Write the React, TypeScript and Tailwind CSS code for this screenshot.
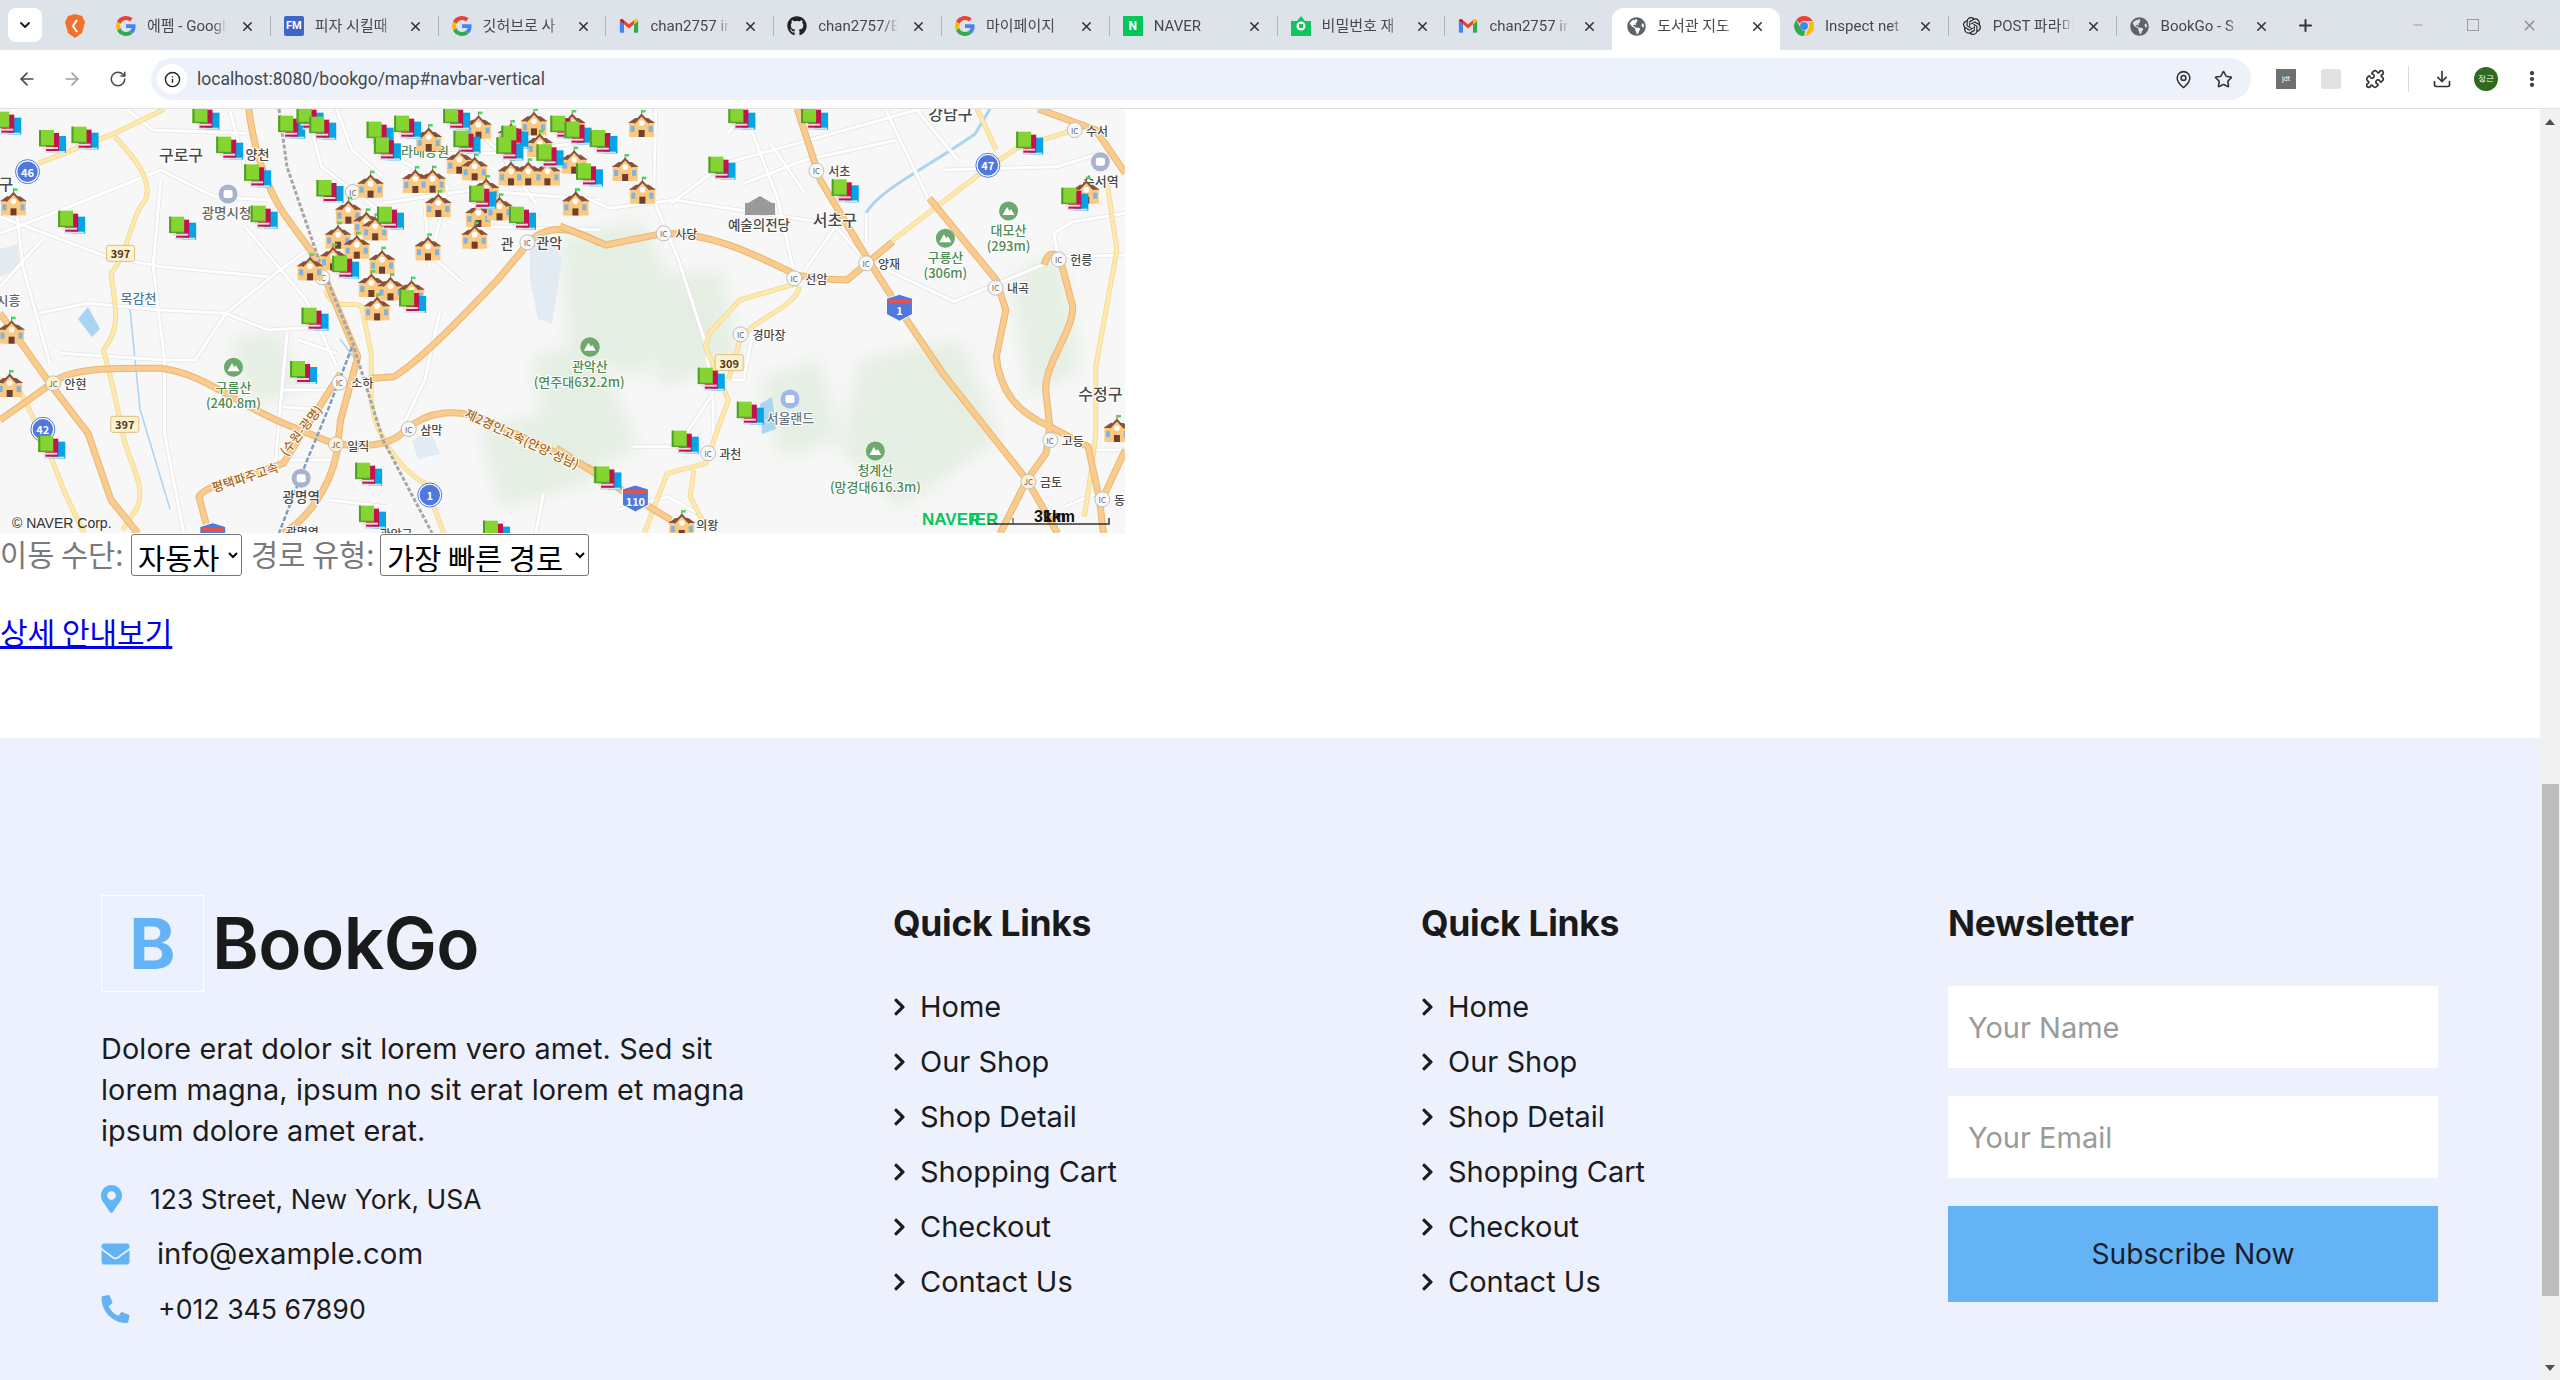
import type { ReactNode } from "react";
import { ArrowLeft, ArrowRight, RotateCw, Info, MapPin, Star, Puzzle, Download, MoreVertical, X, Plus, ChevronDown, Minus } from "lucide-react";
import { FaGithub, FaGlobeAmericas, FaMapMarkerAlt, FaEnvelope, FaPhoneAlt, FaChevronRight } from "react-icons/fa";
import { SiOpenai } from "react-icons/si";

const G = () => (
  <svg width="20" height="20" viewBox="0 0 48 48">
    <path fill="#EA4335" d="M24 9.5c3.5 0 6.7 1.2 9.2 3.6l6.9-6.9C35.9 2.4 30.5 0 24 0 14.6 0 6.5 5.4 2.6 13.2l8 6.2C12.5 13.7 17.8 9.5 24 9.5z" />
    <path fill="#4285F4" d="M47 24.5c0-1.6-.1-3.1-.4-4.5H24v9h13c-.6 3-2.2 5.5-4.8 7.2l7.7 6C44.4 37.9 47 31.8 47 24.5z" />
    <path fill="#FBBC05" d="M10.6 28.6c-.5-1.4-.8-3-.8-4.6s.3-3.2.8-4.6l-8-6.2C.9 16.5 0 20.1 0 24s.9 7.5 2.6 10.8l8-6.2z" />
    <path fill="#34A853" d="M24 48c6.5 0 11.9-2.1 15.9-5.8l-7.7-6c-2.1 1.4-4.9 2.3-8.2 2.3-6.2 0-11.5-4.2-13.4-9.9l-8 6.2C6.5 42.6 14.6 48 24 48z" />
  </svg>
);
const Gmail = () => (
  <svg width="20" height="20" viewBox="0 0 24 24">
    <path fill="#4285F4" d="M1 6v13a1 1 0 0 0 1 1h4V10z" />
    <path fill="#34A853" d="M23 6v13a1 1 0 0 1-1 1h-4V10z" />
    <path fill="#EA4335" d="M6 10v-5l6 5 6-5v5l-6 5z" />
    <path fill="#C5221F" d="M1 6c0-2 2-3 3.5-2L6 5v5L1 6z" />
    <path fill="#FBBC05" d="M23 6c0-2-2-3-3.5-2L18 5v5l5-4z" />
  </svg>
);
const Fm = () => <div className="flex h-5 w-5 items-center justify-center rounded-[2px] bg-[#3f66c4] text-[11px] font-bold text-white">FM</div>;
const Naver = () => <div className="flex h-5 w-5 items-center justify-center bg-[#03c75a] text-[12px] font-bold text-white">N</div>;
const NaverMail = () => (
  <svg width="20" height="22" viewBox="0 0 20 22">
    <path d="M0 6 L6 6 L10 1 L14 6 L20 6 L20 21 L0 21 Z" fill="#12c45c" />
    <circle cx="10" cy="11" r="4.5" fill="#fff" />
    <rect x="8" y="9" width="4" height="4" fill="#12c45c" />
  </svg>
);
const Chrome = () => (
  <svg width="20" height="20" viewBox="0 0 48 48">
    <path fill="#EA4335" d="M24 0a24 24 0 0 1 20.8 12H24a12 12 0 0 0-10.4 6L5.2 9.5A24 24 0 0 1 24 0z" />
    <path fill="#FBBC05" d="M44.8 12A24 24 0 0 1 27 47.8L34.4 30A12 12 0 0 0 34.4 18z" />
    <path fill="#34A853" d="M5.2 9.5l10 17.5a12 12 0 0 0 12 8.6L24 48A24 24 0 0 1 5.2 9.5z" />
    <circle cx="24" cy="24" r="9.5" fill="#4285F4" />
  </svg>
);
const Globe = () => <FaGlobeAmericas className="h-[19px] w-[19px] text-[#5f6368]" />;

const tabs: { title: string; icon: ReactNode; active?: boolean }[] = [
  { title: "에펨 - Google", icon: <G /> },
  { title: "피자 시킬때", icon: <Fm /> },
  { title: "깃허브로 사", icon: <G /> },
  { title: "chan2757 in", icon: <Gmail /> },
  { title: "chan2757/B", icon: <FaGithub className="h-5 w-5 text-[#222]" /> },
  { title: "마이페이지", icon: <G /> },
  { title: "NAVER", icon: <Naver /> },
  { title: "비밀번호 재", icon: <NaverMail /> },
  { title: "chan2757 in", icon: <Gmail /> },
  { title: "도서관 지도", icon: <Globe />, active: true },
  { title: "Inspect net", icon: <Chrome /> },
  { title: "POST 파라미", icon: <SiOpenai className="h-[18px] w-[18px] text-[#222]" /> },
  { title: "BookGo - S", icon: <Globe /> },
];

function TabStrip() {
  return (
    <div className="flex h-[50px] shrink-0 items-start bg-[#dee3e9] font-['Roboto','Noto_Sans_CJK_KR',sans-serif]">
      <div className="ml-2 mt-2 flex h-[34px] w-[34px] items-center justify-center rounded-lg bg-white">
        <ChevronDown size={16} strokeWidth={3} className="text-[#222]" />
      </div>
      <svg className="ml-[23px] mt-[14px]" width="20" height="24" viewBox="0 0 20 24">
        <path d="M10 0 L17 2 L20 8 L17 19 L10 24 L3 19 L0 8 L3 2 Z" fill="#f0702c" />
        <path d="M12 6 L8 12 L12 18" stroke="#fff" strokeWidth="2" fill="none" />
      </svg>
      <div className="ml-[17px] flex">
        {tabs.map((t, i) => (
          <div
            key={i}
            className={
              t.active
                ? "relative mt-2 flex h-[42px] w-[167.8px] items-center rounded-t-xl bg-white pb-[6px]"
                : "relative mt-2 flex h-[42px] w-[167.8px] items-center pb-[6px]"
            }
          >
            {i > 0 && !t.active && !tabs[i - 1].active && <div className="absolute left-0 top-[8px] h-[20px] w-px bg-[#aeb3b9]" />}
            <div className="ml-[14px] flex w-[20px] justify-center">{t.icon}</div>
            <div className="ml-[11px] w-[80px] overflow-hidden whitespace-nowrap text-[15px] text-[#45484c] [mask-image:linear-gradient(to_right,black_82%,transparent)]">
              {t.title}
            </div>
            <X size={15} strokeWidth={2.5} className="ml-[13px] text-[#333]" />
          </div>
        ))}
      </div>
      <Plus size={19} strokeWidth={2.5} className="ml-[13px] mt-4 text-[#333]" />
      <Minus size={14} className="ml-[96px] mt-[18px] text-[#9a9ea3]" />
      <div className="ml-[42px] mt-[19px] h-[12px] w-[12px] border border-[#9a9ea3]" />
      <X size={17} className="ml-[42px] mt-[17px] text-[#8a8e93]" />
    </div>
  );
}

function Toolbar() {
  return (
    <div className="flex h-[59px] shrink-0 items-center border-b border-[#e0e0e0] bg-white font-['Roboto',sans-serif]">
      <ArrowLeft size={20} className="ml-[17px] text-[#45484c]" />
      <ArrowRight size={20} className="ml-[25px] text-[#9a9ea3]" />
      <RotateCw size={18} className="ml-[27px] text-[#45484c]" />
      <div className="ml-[24px] flex h-[42px] w-[2100px] items-center rounded-full bg-[#edf2fa]">
        <div className="ml-[6px] flex h-[30px] w-[30px] items-center justify-center rounded-full bg-white">
          <Info size={17} className="text-[#222]" />
        </div>
        <span className="ml-[10px] text-[17.5px] text-[#45484c]">localhost:8080/bookgo/map#navbar-vertical</span>
        <MapPin size={19} className="ml-auto text-[#333]" />
        <Star size={19} className="ml-[21px] mr-[18px] text-[#333]" />
      </div>
      <div className="ml-[25px] flex h-[20px] w-[20px] items-center justify-center bg-[#6f6f6f] text-[7px] text-white">jdt</div>
      <div className="ml-[25px] h-[20px] w-[20px] rounded-[3px] bg-[#e2e2e2]" />
      <Puzzle size={20} className="ml-[24px] text-[#333]" />
      <div className="ml-[23px] h-[26px] w-px bg-[#d5dbe5]" />
      <Download size={20} className="ml-[23px] text-[#333]" />
      <div className="ml-[22px] flex h-6 w-6 items-center justify-center rounded-full bg-[#2f6a1f] text-[8px] text-white">정근</div>
      <MoreVertical size={20} strokeWidth={3} className="ml-[24px] text-[#333]" />
    </div>
  );
}

// map coordinates are taken from two crops of the picture, o is the crop's left edge
const mx = (o: number, x: number) => o + x / 2.613;
const my = (y: number) => y / 3 - 9;

const orange3 = [
  "M650,27 C660,120 690,270 760,370 L830,480 L880,620 L935,770 L890,960 L880,1060 C860,1170 800,1260 740,1300",
  "M0,960 L130,855 C180,800 300,805 420,805 C530,820 600,900 740,970 L870,1030 C950,1045 1020,1040 1060,990 C1120,930 1200,925 1270,960 L1568,1120",
  "M0,640 L130,850 L230,1000 L290,1200 L360,1300",
  "M970,835 L1030,830 C1100,780 1200,660 1300,540 L1380,430 C1420,380 1480,370 1568,430",
  "M545,1300 L520,1190 C540,1150 660,1130 740,1090 L890,820",
];
const yellow3 = [
  "M300,110 C350,170 400,240 380,300 C340,350 340,450 290,520 C300,620 320,680 270,750 C290,830 300,880 320,1000 C340,1100 380,1150 360,1220 L320,1290",
  "M100,190 L300,100 L430,27",
  "M0,840 L40,850 C90,950 130,1060 170,1180 L220,1300",
  "M850,570 C870,640 930,600 945,620 L970,760 L970,900 C980,1020 1060,1120 1110,1150 L1160,1300",
];
const white3 = [
  "M0,400 L160,330 L420,210 L560,290 L700,300", "M420,240 L400,500 L430,780 L430,1000 L480,1300", "M0,350 L280,470 L420,500 L700,530",
  "M100,640 L230,610 L420,630 L590,640 L700,690 L850,680", "M590,640 L720,520 L840,420", "M160,760 L430,780 L510,780 L590,640", "M640,380 L800,600 L880,800",
  "M750,700 L730,950 L720,1090", "M780,720 L880,760", "M740,870 L880,870", "M740,920 L840,930", "M740,1080 L870,1080", "M860,1200 L1010,1220", "M40,300 L60,500 L130,790",
  "M1000,310 L1230,270 L1568,300", "M1000,150 L1170,260 L1120,500", "M880,27 L920,150 L1000,230", "M1110,310 L1120,460 L1210,550", "M1270,380 L1568,390", "M800,27 L840,200 L1000,340",
  "M1150,630 L1110,840 L1060,960", "M1420,1180 L1400,1300", "M600,27 L640,200", "M330,27 L400,90 L640,100", "M0,560 L110,420", "M1000,160 L1300,160 L1568,120", "M1190,30 L1300,150 L1400,310",
];
const orange4 = [
  "M620,27 L680,240 L800,470 L900,650 L1000,820 L1220,1140 L1300,1300",
  "M965,295 L1140,540 L1165,630 L1140,770 C1150,880 1200,940 1280,980 L1380,1040 L1410,1200 L1420,1300",
  "M1220,1140 L1150,1300",
  "M1265,495 C1275,450 1300,455 1310,490 L1340,620 C1340,700 1260,800 1270,880 L1280,980 L1270,1060 L1220,1140",
  "M610,525 L700,537 L750,540 L870,425",
  "M1250,27 L1400,90 L1477,220",
  "M1477,1050 L1420,1190",
  "M0,378 L120,435 L270,400 C400,400 500,460 610,520",
  "M-10,1045 L160,1170 L290,1260",
];
const yellow4 = [
  "M1090,27 L1140,150",
  "M870,420 L1110,210 L1200,140 L1330,95",
  "M1430,250 L1455,450 L1400,800 L1400,1000 L1390,1100 L1370,1250",
  "M620,550 L470,600 L390,700 L380,740 L440,900 L380,1090 L280,1120 L220,1300",
  "M625,560 C620,620 500,660 470,720 L440,840",
  "M350,1110 L340,1190 L380,1280",
];
const white4 = [
  "M250,27 L245,300 L310,480 L380,730 L400,900 L400,1000", "M80,300 L130,325 L300,300 L470,330 L700,370", "M290,310 L430,190 L620,130 L940,27", "M440,100 L480,27", "M500,90 L570,300 L610,510", "M480,250 L640,180 L880,120",
  "M640,510 L720,380 L790,470", "M800,480 L1030,605 L1270,490", "M1000,210 L1300,200 L1410,160", "M850,27 L960,290", "M930,27 L1040,180", "M550,130 L640,280", "M1290,400 L1340,365 L1477,340", "M1310,470 L1477,465", "M1290,400 L1300,460",
  "M360,840 L480,840 L500,720", "M190,1040 L370,1040", "M330,1000 L400,880", "M150,1230 L280,1190 L360,1240", "M1320,1220 L1400,1180", "M1400,1050 L1477,1050", "M800,340 L800,430",
];

const booksA: [number, number][] = [
  [-15, 35], [102, 90], [187, 80], [503, 20], [565, 110], [638, 193], [727, 47], [775, 20], [808, 50], [958, 65], [1030, 47], [977, 112], [1158, 20], [1185, 92], [1310, 77], [1297, 112], [1402, 133], [1438, 47], [1475, 65], [1543, 90], [827, 240], [1226, 257], [1330, 320], [985, 320], [152, 332], [442, 350], [655, 317], [868, 467], [1043, 570], [788, 623], [758, 783], [100, 1007], [928, 1088], [938, 1217], [1262, 1262], [1552, 1100], [1505, 190],
];
const booksB: [number, number][] = [
  [78, 92], [440, 20], [630, 20], [388, 170], [710, 238], [1192, 95], [1310, 263], [360, 803], [462, 905], [292, 992], [90, 1100],
];
const schoolsA: [number, number][] = [
  [0, 265], [-5, 650], [933, 212], [1050, 198], [1095, 197], [1085, 72], [1215, 35], [1165, 140], [1205, 160], [1360, 25], [1300, 60], [1375, 90], [1300, 175], [1345, 175], [1395, 175], [1465, 140], [1110, 270], [1235, 225], [1215, 300], [1270, 280], [1470, 265], [1205, 365], [1083, 400], [875, 290], [922, 325], [945, 340], [848, 365], [897, 395], [835, 430], [775, 460], [963, 440], [935, 510], [985, 520], [1040, 530], [950, 580], [-10, 810], [1460, 30],
];
const schoolsB: [number, number][] = [[178, 30], [135, 162], [180, 230], [5, 265], [1340, 230], [1420, 945], [283, 1230]];

function Book({ x, y }: { x: number; y: number }) {
  return (
    <g transform={`translate(${x} ${y})`}>
      <rect x="13" y="6" width="14" height="17" fill="#04a5e8" />
      <rect x="6" y="21" width="20" height="2" fill="#cde3ee" />
      <rect x="7" y="3" width="13" height="18" fill="#c5114e" />
      <rect x="4" y="17" width="15" height="2" fill="#f2d8e0" />
      <rect x="0" y="0" width="15" height="16" fill="#84d432" />
      <rect x="0" y="0" width="2" height="16" fill="#4f9d2b" />
      <rect x="0" y="15" width="15" height="1.5" fill="#5aa133" />
    </g>
  );
}

function School({ x, y }: { x: number; y: number }) {
  return (
    <g transform={`translate(${x} ${y})`}>
      <rect x="1" y="12" width="25" height="15" fill="#fcc981" />
      <polygon points="0,13 7,8 20,8 27,13" fill="#85533f" />
      <polygon points="7,27 7,12 13.5,5 20,12 20,27" fill="#fcc981" />
      <polyline points="6,13 13.5,5 21,13" fill="none" stroke="#85533f" strokeWidth="2" />
      <line x1="13.5" y1="5" x2="13.5" y2="0" stroke="#85533f" strokeWidth="0.8" />
      <rect x="13.5" y="0" width="4" height="2.5" fill="#3fdc5f" />
      <circle cx="13.5" cy="13" r="2.8" fill="#fff" />
      <rect x="10.5" y="20" width="6" height="7" fill="#6d3f2c" />
      <rect x="2.5" y="16" width="4" height="6" fill="#7fb3e0" />
      <rect x="20.5" y="16" width="4" height="6" fill="#7fb3e0" />
    </g>
  );
}

function Roads({ o, orange, yellow, white }: { o: number; orange: string[]; yellow: string[]; white: string[] }) {
  const line = (d: string, color: string, w: number) => (
    <path d={d} fill="none" stroke={color} strokeWidth={w} strokeLinejoin="round" vectorEffect="non-scaling-stroke" />
  );
  return (
    <g transform={`translate(${o} -9) scale(0.3827 0.3333)`}>
      {white.map((d, i) => <g key={i}>{line(d, "#e4e4e4", 4.5)}</g>)}
      {white.map((d, i) => <g key={i}>{line(d, "#ffffff", 3)}</g>)}
      {yellow.map((d, i) => <g key={i}>{line(d, "#f2d694", 5)}</g>)}
      {yellow.map((d, i) => <g key={i}>{line(d, "#fde9ad", 3.5)}</g>)}
      {orange.map((d, i) => <g key={i}>{line(d, "#edb56f", 7)}</g>)}
      {orange.map((d, i) => <g key={i}>{line(d, "#f8cb8f", 5)}</g>)}
    </g>
  );
}

function Label({ o, x, y, t, size = 12, fill = "#4a4a4a", rot = 0, w = 500 }: { o: number; x: number; y: number; t: string; size?: number; fill?: string; rot?: number; w?: number }) {
  const px = mx(o, x);
  const py = my(y);
  return (
    <text
      x={px}
      y={py}
      textAnchor="middle"
      dominantBaseline="central"
      fontSize={size}
      fontWeight={w}
      fill={fill}
      stroke="#ffffff"
      strokeWidth={2}
      paintOrder="stroke"
      transform={rot ? `rotate(${rot} ${px} ${py})` : undefined}
    >
      {t}
    </text>
  );
}

function Ic({ o, x, y, t = "IC" }: { o: number; x: number; y: number; t?: string }) {
  return (
    <g>
      <circle cx={mx(o, x)} cy={my(y)} r={7.5} fill={t === "JC" ? "#fdf1cf" : "#f8f8f8"} stroke="#bdbdbd" />
      <text x={mx(o, x)} y={my(y)} textAnchor="middle" dominantBaseline="central" fontSize="8" fill="#666">{t}</text>
    </g>
  );
}

function Route({ o, x, y, t }: { o: number; x: number; y: number; t: string }) {
  return (
    <g>
      <rect x={mx(o, x) - 14} y={my(y) - 8} width="28" height="16" rx="2" fill="#fdf2cf" stroke="#dcbf80" />
      <text x={mx(o, x)} y={my(y)} textAnchor="middle" dominantBaseline="central" fontSize="11" fontWeight="700" fill="#4a3a20">{t}</text>
    </g>
  );
}

function Circle({ o, x, y, t }: { o: number; x: number; y: number; t: string }) {
  return (
    <g>
      <circle cx={mx(o, x)} cy={my(y)} r={11} fill="#4f79dc" stroke="#fff" strokeWidth="1.5" />
      <circle cx={mx(o, x)} cy={my(y)} r={12} fill="none" stroke="#4f79dc" />
      <text x={mx(o, x)} y={my(y)} textAnchor="middle" dominantBaseline="central" fontSize="11" fontWeight="700" fill="#fff">{t}</text>
    </g>
  );
}

function Shield({ o, x, y, t }: { o: number; x: number; y: number; t: string }) {
  const a = mx(o, x);
  const b = my(y);
  return (
    <g>
      <path d={`M${a - 13} ${b - 10} L${a} ${b - 14} L${a + 13} ${b - 10} L${a + 13} ${b + 6} L${a} ${b + 13} L${a - 13} ${b + 6} Z`} fill="#4f79dc" stroke="#fff" />
      <rect x={a - 11} y={b - 9} width="22" height="4" fill="#e5524a" />
      <text x={a} y={b + 2} textAnchor="middle" dominantBaseline="central" fontSize="11" fontWeight="700" fill="#fff">{t}</text>
    </g>
  );
}

function Peak({ o, x, y }: { o: number; x: number; y: number }) {
  const a = mx(o, x);
  const b = my(y);
  return (
    <g>
      <circle cx={a} cy={b} r={9.5} fill="#6fa86f" />
      <path d={`M${a - 6} ${b + 4} L${a - 1.5} ${b - 4} L${a + 1} ${b} L${a + 2.5} ${b - 2} L${a + 6} ${b + 4} Z`} fill="#fff" />
    </g>
  );
}

function Poi({ o, x, y, c }: { o: number; x: number; y: number; c: string }) {
  return (
    <g>
      <circle cx={mx(o, x)} cy={my(y)} r={9.5} fill={c} />
      <rect x={mx(o, x) - 4.5} y={my(y) - 4} width="9" height="8" rx="2" fill="#fff" />
    </g>
  );
}

function NaverMap() {
  return (
    <svg className="block shrink-0 bg-[#f7f7f7] font-['Noto_Sans_CJK_KR',sans-serif]" width="1125" height="424" viewBox="0 0 1125 424">
      <defs>
        <filter id="soft" x="-30%" y="-30%" width="160%" height="160%">
          <feGaussianBlur stdDeviation="9" />
        </filter>
      </defs>
      <g fill="#d6e8d2" opacity="0.55" filter="url(#soft)">
        <polygon points="560,130 640,110 680,190 640,270 570,240" />
        <polygon points="860,250 960,230 1000,330 900,400 840,340" />
        <polygon points="530,250 590,230 640,340 560,370" />
        <polygon points="640,170 720,160 740,250 660,280" />
        <polygon points="1010,170 1060,140 1080,260 1030,290" />
        <polygon points="230,230 280,220 300,280 250,300" />
        <polygon points="480,320 560,300 600,370 500,400" />
        <polygon points="760,270 820,250 840,330 780,350" />
      </g>
      <g fill="#e3ebf2">
        <polygon points="530,135 552,130 562,150 552,215 538,210 530,170" />
        <polygon points="0,140 18,135 20,160 0,168" />
        <polygon points="412,332 430,320 440,345 418,350" />
      </g>
      <g fill="#a9d4f2">
        <polygon points="78,210 88,198 100,220 92,228" />
        <polygon points="760,295 772,288 776,320 762,325" />
      </g>
      <g fill="none" stroke="#a9d4f2" strokeWidth="3">
        <path d="M866,104 C880,80 925,60 975,25 L990,0" />
        <path d="M350,290 L355,250 L340,230" strokeWidth="1.5" />
        <path d="M130,200 L140,300 L170,400" strokeWidth="1.5" />
      </g>
      <Roads o={0} orange={orange3} yellow={yellow3} white={white3} />
      <Roads o={560} orange={orange4} yellow={yellow4} white={white4} />
      <g fill="none" strokeWidth="3">
        <path d="M279,0 L287,58 L318,148 L352,232 L383,331 L432,424" stroke="#a6a6a6" strokeDasharray="4 2" />
        <path d="M352,238 L329,298 L306,354 L279,424" stroke="#7c9fbd" strokeWidth="2.5" strokeDasharray="5 2" />
      </g>

      <Label o={0} x={473} y={163} t="구로구" size={16} />
      <Label o={0} x={15} y={250} t="구" size={16} />
      <Label o={0} x={673} y={160} t="양천" size={13} />
      <Label o={0} x={1095} y={150} t="보라매공원" size={13} fill="#4f8a55" />
      <Label o={0} x={592} y={337} t="광명시청" size={13.5} fill="#666" />
      <Label o={0} x={362} y={592} t="목감천" size={13} fill="#4f7ba0" />
      <Label o={0} x={197} y={850} t="안현" size={12} />
      <Label o={0} x={947} y={847} t="소하" size={12} />
      <Label o={0} x={1127} y={988} t="삼막" size={12} />
      <Label o={0} x={936} y={1035} t="일직" size={12} />
      <Label o={0} x={610} y={858} t="구름산" size={13} fill="#4c8a52" />
      <Label o={0} x={610} y={908} t="(240.8m)" size={13} fill="#4c8a52" />
      <Label o={0} x={787} y={1188} t="광명역" size={13.5} />
      <Label o={0} x={22} y={598} t="시흥" size={13} fill="#666" />
      <Label o={0} x={1325} y={430} t="관" size={14} />
      <Label o={0} x={1435} y={427} t="관악" size={14} />
      <Label o={0} x={1365} y={1015} t="제2경인고속(안양-성남)" size={12.5} fill="#a8650f" rot={25} />
      <Label o={0} x={640} y={1130} t="평택파주고속" size={12.5} fill="#a8650f" rot={-18} />
      <Label o={0} x={785} y={990} t="(수원-광명)" size={12.5} fill="#a8650f" rot={-52} />
      <Label o={0} x={790} y={1295} t="광명역" size={12} />
      <Label o={0} x={1035} y={1300} t="관악구" size={12} />

      <Route o={0} x={315} y={460} t="397" />
      <Route o={0} x={326} y={973} t="397" />
      <Circle o={0} x={72} y={215} t="46" />
      <Circle o={0} x={112} y={988} t="42" />
      <Circle o={0} x={1123} y={1185} t="1" />
      <Shield o={0} x={556} y={1310} t="" />
      <Ic o={0} x={922} y={276} />
      <Ic o={0} x={1378} y={427} />
      <Ic o={0} x={842} y={532} />
      <Ic o={0} x={139} y={850} t="JC" />
      <Ic o={0} x={887} y={848} />
      <Ic o={0} x={878} y={1033} t="JC" />
      <Ic o={0} x={1068} y={987} />
      <Peak o={0} x={610} y={802} />
      <Peak o={0} x={1542} y={742} />
      <Poi o={0} x={596} y={282} c="#a8b3d0" />
      <Poi o={0} x={787} y={1135} c="#a8b3d0" />

      <g fill="#9a9a9a">
        <rect x={745} y={94} width="30" height="12" />
        <polygon points="748,94 760,87 772,94" />
      </g>
      <Label o={560} x={520} y={373} t="예술의전당" size={13.5} />
      <Label o={560} x={718} y={358} t="서초구" size={16} />
      <Label o={560} x={1020} y={38} t="강남구" size={16} />
      <Label o={560} x={1412} y={880} t="수정구" size={16} />
      <Label o={560} x={730} y={212} t="서초" size={12} />
      <Label o={560} x={330} y={400} t="사당" size={12} />
      <Label o={560} x={670} y={535} t="선암" size={12} />
      <Label o={560} x={860} y={490} t="양재" size={12} />
      <Label o={560} x={1197} y={563} t="내곡" size={12} />
      <Label o={560} x={1362} y={478} t="헌릉" size={12} />
      <Label o={560} x={1403} y={90} t="수서" size={12} />
      <Label o={560} x={546} y={703} t="경마장" size={12} />
      <Label o={560} x={445} y={1060} t="과천" size={12} />
      <Label o={560} x={1340} y={1020} t="고등" size={12} />
      <Label o={560} x={1283} y={1145} t="금토" size={12} />
      <Label o={560} x={1462} y={1198} t="동" size={12} />
      <Label o={560} x={385} y={1274} t="의왕" size={12} />
      <Label o={560} x={1413} y={240} t="수서역" size={13} />
      <Label o={560} x={602} y={952} t="서울랜드" size={13} fill="#6b7280" />
      <Label o={560} x={1007} y={470} t="구룡산" size={13} fill="#4c8a52" />
      <Label o={560} x={1007} y={518} t="(306m)" size={13} fill="#4c8a52" />
      <Label o={560} x={1172} y={388} t="대모산" size={13} fill="#4c8a52" />
      <Label o={560} x={1172} y={436} t="(293m)" size={13} fill="#4c8a52" />
      <Label o={560} x={78} y={795} t="관악산" size={13} fill="#4c8a52" />
      <Label o={560} x={50} y={845} t="(연주대632.2m)" size={13} fill="#4c8a52" />
      <Label o={560} x={824} y={1107} t="청계산" size={13} fill="#4c8a52" />
      <Label o={560} x={824} y={1158} t="(망경대616.3m)" size={13} fill="#4c8a52" />

      <Route o={560} x={442} y={788} t="309" />
      <Circle o={560} x={1118} y={196} t="47" />
      <Shield o={560} x={887} y={625} t="1" />
      <Shield o={560} x={197} y={1197} t="110" />
      <Ic o={560} x={670} y={212} />
      <Ic o={560} x={271} y={400} />
      <Ic o={560} x={612} y={535} />
      <Ic o={560} x={800} y={490} />
      <Ic o={560} x={1138} y={563} />
      <Ic o={560} x={1303} y={478} />
      <Ic o={560} x={1345} y={90} />
      <Ic o={560} x={472} y={703} />
      <Ic o={560} x={387} y={1060} />
      <Ic o={560} x={1281} y={1020} />
      <Ic o={560} x={1224} y={1145} t="JC" />
      <Ic o={560} x={1417} y={1198} />
      <Peak o={560} x={1007} y={415} />
      <Peak o={560} x={1172} y={333} />
      <Peak o={560} x={78} y={740} />
      <Peak o={560} x={824} y={1053} />
      <Poi o={560} x={601} y={897} c="#9db8ea" />
      <Poi o={560} x={1412} y={185} c="#a8b3d0" />

      {schoolsA.map(([x, y], i) => <School key={i} x={mx(0, x)} y={my(y)} />)}
      {schoolsB.map(([x, y], i) => <School key={i} x={mx(560, x)} y={my(y)} />)}
      {booksA.map(([x, y], i) => <Book key={i} x={mx(0, x)} y={my(y)} />)}
      {booksB.map(([x, y], i) => <Book key={i} x={mx(560, x)} y={my(y)} />)}

      <text x="12" y="419" fontSize="14" fill="#333" fontFamily="'Liberation Sans',sans-serif">© NAVER Corp.</text>
      <text x="922" y="416" fontSize="17" fontWeight="800" fill="#03c75a" fontFamily="'Liberation Sans',sans-serif">NAVER</text>
      <text x="970" y="416" fontSize="17" fontWeight="800" fill="#03c75a" fontFamily="'Liberation Sans',sans-serif">/ER</text>
      <text x="1034" y="413" fontSize="16" fontWeight="700" fill="#111" fontFamily="'Liberation Sans',sans-serif">3km</text>
      <text x="1043" y="413" fontSize="16" fontWeight="700" fill="#111" fontFamily="'Liberation Sans',sans-serif">1km</text>
      <path d="M988,415 L1109,415 L1109,409" fill="none" stroke="#333" strokeWidth="1.5" />
      <path d="M1013,409 L1013,415" stroke="#333" />
    </svg>
  );
}

function Directions() {
  return (
    <div className="flex h-[43px] items-start pt-px font-['Noto_Sans_CJK_KR',sans-serif] text-[29.5px] leading-[38px] text-[#7a7a7a]">
      <span className="w-[131px] whitespace-nowrap">이동 수단:</span>
      <select className="h-[42px] w-[111px] rounded-[3px] border border-[#767676] pb-[3px] pl-[2px] text-[29.5px] leading-none text-black">
        <option>자동차</option>
      </select>
      <span className="w-[138px] whitespace-nowrap pl-[9px]">경로 유형:</span>
      <select className="h-[42px] w-[209px] rounded-[3px] border border-[#767676] pb-[3px] pl-[2px] text-[29.5px] leading-none text-black">
        <option>가장 빠른 경로</option>
      </select>
    </div>
  );
}

const links = ["Home", "Our Shop", "Shop Detail", "Shopping Cart", "Checkout", "Contact Us"];

function LinkColumn() {
  return (
    <div>
      <h4 className="mt-[7px] text-[35.5px] font-bold leading-[44px] tracking-[-0.3px] text-[#1a1a1a]">Quick Links</h4>
      <ul className="mt-[46px] flex flex-col gap-[25px]">
        {links.map((l) => (
          <li key={l} className="flex h-[30px] items-center text-[29px] leading-[30px] text-[#1c1c1c]">
            <FaChevronRight className="mr-[14px] h-[20px] w-[13px] text-[#1c1c1c]" />
            {l}
          </li>
        ))}
      </ul>
    </div>
  );
}

function Footer() {
  return (
    <footer className="flex-1 bg-[#edf1fe] pl-[101px] pt-[157px] font-['Inter',sans-serif]">
      <div className="grid grid-cols-[792px_528px_527px_490px]">
        <div>
          <div className="flex items-center">
            <div className="flex h-[97px] w-[103px] items-center justify-center border border-white text-[70px] font-bold text-[#63b3f5]">B</div>
            <span className="ml-[8px] text-[71px] font-semibold leading-none tracking-[-0.5px] text-[#1a1a1a]">BookGo</span>
          </div>
          <p className="mt-[36px] w-[680px] text-[28.8px] leading-[41px] tracking-[0.12px] text-[#1c1c1c]">
            Dolore erat dolor sit lorem vero amet. Sed sit lorem magna, ipsum no sit erat lorem et magna ipsum dolore amet erat.
          </p>
          <div className="mt-[33px] flex flex-col gap-[25px] leading-[30px] text-[#1c1c1c]">
            <div className="flex h-[30px] items-center text-[26.5px]">
              <FaMapMarkerAlt className="mr-[28px] h-[28px] w-[21px] text-[#63b3f5]" />
              123 Street, New York, USA
            </div>
            <div className="flex h-[30px] items-center text-[29.4px]">
              <FaEnvelope className="mr-[27px] h-[28px] w-[29px] text-[#63b3f5]" />
              info@example.com
            </div>
            <div className="flex h-[30px] items-center text-[26.7px]">
              <FaPhoneAlt className="mr-[28px] h-[28px] w-[29px] text-[#63b3f5]" />
              +012 345 67890
            </div>
          </div>
        </div>
        <LinkColumn />
        <LinkColumn />
        <div>
          <h4 className="mt-[7px] text-[35.5px] font-bold leading-[44px] tracking-[-0.3px] text-[#1a1a1a]">Newsletter</h4>
          <form className="mt-[40px] flex flex-col gap-[28px]">
            <input placeholder="Your Name" className="h-[82px] bg-white px-5 text-[29px] outline-none placeholder:text-[#9a9a9a]" />
            <input placeholder="Your Email" className="h-[82px] bg-white px-5 text-[29px] outline-none placeholder:text-[#9a9a9a]" />
            <button type="button" className="h-[96px] bg-[#63b3f5] text-[28.2px] text-[#1c1c2b]">Subscribe Now</button>
          </form>
        </div>
      </div>
    </footer>
  );
}

function Scrollbar() {
  return (
    <div className="flex w-5 shrink-0 flex-col items-center bg-[#f1f1f1]">
      <div className="mt-[10px] h-0 w-0 border-x-[5px] border-b-[6px] border-x-transparent border-b-[#505050]" />
      <div className="mt-[659px] h-[512px] w-[17px] bg-[#bdbdbd]" />
      <div className="mt-[69px] h-0 w-0 border-x-[5px] border-t-[6px] border-x-transparent border-t-[#505050]" />
    </div>
  );
}

export default function App() {
  return (
    <div className="flex h-screen flex-col overflow-hidden bg-white">
      <TabStrip />
      <Toolbar />
      <div className="flex min-h-0 flex-1">
        <main className="flex min-w-0 flex-1 flex-col">
          <NaverMap />
          <Directions />
          <a href="#" className="mt-[35px] h-[127px] w-max font-['Noto_Sans_CJK_KR',sans-serif] text-[30px] leading-[40px] text-[#0000ee] underline">상세 안내보기</a>
          <Footer />
        </main>
        <Scrollbar />
      </div>
    </div>
  );
}
